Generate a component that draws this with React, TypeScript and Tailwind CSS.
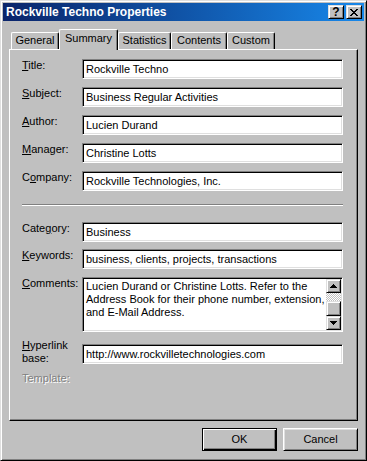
const FONT = "font-['Liberation_Sans',Arial,sans-serif]";

type Row = { pre: string; key: string; post: string; value: string; gap: string };

const TOP_ROWS: Row[] = [
  { pre: '', key: 'T', post: 'itle:', value: 'Rockville Techno', gap: 'mt-0' },
  { pre: '', key: 'S', post: 'ubject:', value: 'Business Regular Activities', gap: 'mt-[8px]' },
  { pre: '', key: 'A', post: 'uthor:', value: 'Lucien Durand', gap: 'mt-[8px]' },
  { pre: '', key: 'M', post: 'anager:', value: 'Christine Lotts', gap: 'mt-[8px]' },
  { pre: 'C', key: 'o', post: 'mpany:', value: 'Rockville Technologies, Inc.', gap: 'mt-[8px]' },
];

const TABS = [
  { label: 'General', w: 'w-[48px]', active: false },
  { label: 'Summary', w: 'w-[59px]', active: true },
  { label: 'Statistics', w: 'w-[53px]', active: false },
  { label: 'Contents', w: 'w-[56px]', active: false },
  { label: 'Custom', w: 'w-[48px]', active: false },
];

function Accel({ pre, k, post }: { pre: string; k: string; post: string }) {
  return (
    <span>
      {pre}
      <span className="underline">{k}</span>
      {post}
    </span>
  );
}

function Field({ value }: { value: string }) {
  return (
    <div className="flex h-[20px] w-[261px] items-center whitespace-nowrap border border-t-[#808080] border-l-[#808080] border-r-white border-b-white bg-white pl-[3px] shadow-[inset_1px_1px_#000,inset_-1px_-1px_#dfdfdf]">
      {value}
    </div>
  );
}

function SbButton({ up }: { up?: boolean }) {
  return (
    <div className="flex h-[14px] items-center justify-center border border-t-[#dfdfdf] border-l-[#dfdfdf] border-r-black border-b-black bg-[#c0c0c0] shadow-[inset_1px_1px_#fff,inset_-1px_-1px_#808080]">
      <svg width="7" height="4" viewBox="0 0 7 4" shapeRendering="crispEdges">
        <path
          d={up ? 'M3 0h1v1h1v1h1v1h1v1H0V3h1V2h1V1h1z' : 'M0 0h7v1H6v1H5v1H4v1H3V3H2V2H1V1H0z'}
          fill="#000"
        />
      </svg>
    </div>
  );
}

function CapButton({ children }: { children: React.ReactNode }) {
  return (
    <div className="flex h-[14px] w-[16px] items-center justify-center border border-t-[#dfdfdf] border-l-[#dfdfdf] border-r-black border-b-black bg-[#c0c0c0] shadow-[inset_1px_1px_#fff,inset_-1px_-1px_#808080]">
      {children}
    </div>
  );
}

export default function App() {
  return (
    <div
      className={`${FONT} h-[461px] w-[367px] border border-t-[#dfdfdf] border-l-[#dfdfdf] border-r-black border-b-black bg-[#c0c0c0] p-[2px] text-[11px] leading-[13px] text-black shadow-[inset_1px_1px_#fff,inset_-1px_-1px_#808080]`}
    >
      {/* caption */}
      <div className="flex h-[18px] items-center bg-linear-to-r from-[#0a246a] to-[#1888ea] pl-[3px] pr-[2px]">
        <span className="flex-1 text-[12px] font-bold text-white">Rockville Techno Properties</span>
        <CapButton>
          <span className="text-[12px] font-bold leading-none">?</span>
        </CapButton>
        <div className="ml-[2px]">
          <CapButton>
            <svg width="8" height="7" viewBox="0 0 8 7" shapeRendering="crispEdges">
              <path
                d="M0 0h2v1h1v1h2V1h1V0h2v1H7v1H6v1H5v1h1v1h1v1h1v1H6V6H5V5H3v1H2v1H0V6h1V5h1V4h1V3H2V2H1V1H0z"
                fill="#000"
              />
            </svg>
          </CapButton>
        </div>
      </div>

      {/* tabs */}
      <div className="relative z-10 ml-[8px] mt-[8px] flex h-[20px] items-end">
        {TABS.map((t) =>
          t.active ? (
            <div
              key={t.label}
              className={`${t.w} -mb-px flex h-[21px] justify-center rounded-t-[2px] border-t border-l border-r border-t-white border-l-white border-r-black bg-[#c0c0c0] pt-[2px] shadow-[inset_-1px_0_#808080]`}
            >
              {t.label}
            </div>
          ) : (
            <div
              key={t.label}
              className={`${t.w} flex h-[17px] justify-center rounded-t-[2px] border-t border-l border-r border-t-white border-l-white border-r-black bg-[#c0c0c0] pt-[1px] shadow-[inset_-1px_0_#808080]`}
            >
              {t.label}
            </div>
          ),
        )}
      </div>

      {/* sheet */}
      <div className="mx-[6px] flex h-[372px] flex-col border border-t-white border-l-white border-r-black border-b-black pl-[12px] pt-[9px] shadow-[inset_-1px_-1px_#808080]">
        {TOP_ROWS.map((r) => (
          <div key={r.value} className={`${r.gap} flex items-start`}>
            <div className="w-[60px]">
              <Accel pre={r.pre} k={r.key} post={r.post} />
            </div>
            <Field value={r.value} />
          </div>
        ))}

        <div className="mt-[13px] h-[2px] w-[321px] border-t border-b border-t-[#808080] border-b-white" />

        <div className="mt-[16px] flex items-start">
          <div className="w-[60px]">
            <Accel pre="Cate" k="g" post="ory:" />
          </div>
          <Field value="Business" />
        </div>

        <div className="mt-[7px] flex items-start">
          <div className="w-[60px]">
            <Accel pre="" k="K" post="eywords:" />
          </div>
          <Field value="business, clients, projects, transactions" />
        </div>

        <div className="mt-[8px] flex items-start">
          <div className="w-[60px]">
            <Accel pre="" k="C" post="omments:" />
          </div>
          <div className="flex h-[55px] w-[261px] border border-t-[#808080] border-l-[#808080] border-r-white border-b-white bg-white p-px shadow-[inset_1px_1px_#000,inset_-1px_-1px_#dfdfdf]">
            <div className="flex-1 whitespace-nowrap pl-[2px] pt-px">
              Lucien Durand or Christine Lotts. Refer to the
              <br />
              Address Book for their phone number, extension,
              <br />
              and E-Mail Address.
            </div>
            <div className="flex w-[15px] flex-col">
              <SbButton up />
              <div className="h-[8px] bg-[conic-gradient(#fff_25%,#c0c0c0_0_50%,#fff_0_75%,#c0c0c0_0)] bg-[length:2px_2px]" />
              <div className="flex-1 border border-t-[#dfdfdf] border-l-[#dfdfdf] border-r-black border-b-black bg-[#c0c0c0] shadow-[inset_1px_1px_#fff,inset_-1px_-1px_#808080]" />
              <SbButton />
            </div>
          </div>
        </div>

        <div className="mt-[12px] flex items-start">
          <div className="-mt-[5px] w-[60px]">
            <Accel pre="" k="H" post="yperlink" />
            <br />
            base:
          </div>
          <Field value="http://www.rockvilletechnologies.com" />
        </div>

        <div className="mt-[7px] text-[#808080] [text-shadow:1px_1px_0_#fff]">Template:</div>
      </div>

      {/* buttons */}
      <div className="mr-[6px] mt-[7px] flex justify-end gap-[6px]">
        <div className="flex h-[23px] w-[75px] items-center justify-center border border-black shadow-[inset_1px_1px_#fff,inset_-1px_-1px_#000,inset_-2px_-2px_#808080]">
          OK
        </div>
        <div className="flex h-[23px] w-[75px] items-center justify-center border border-t-white border-l-white border-r-black border-b-black shadow-[inset_1px_1px_#dfdfdf,inset_-1px_-1px_#808080]">
          Cancel
        </div>
      </div>
    </div>
  );
}
